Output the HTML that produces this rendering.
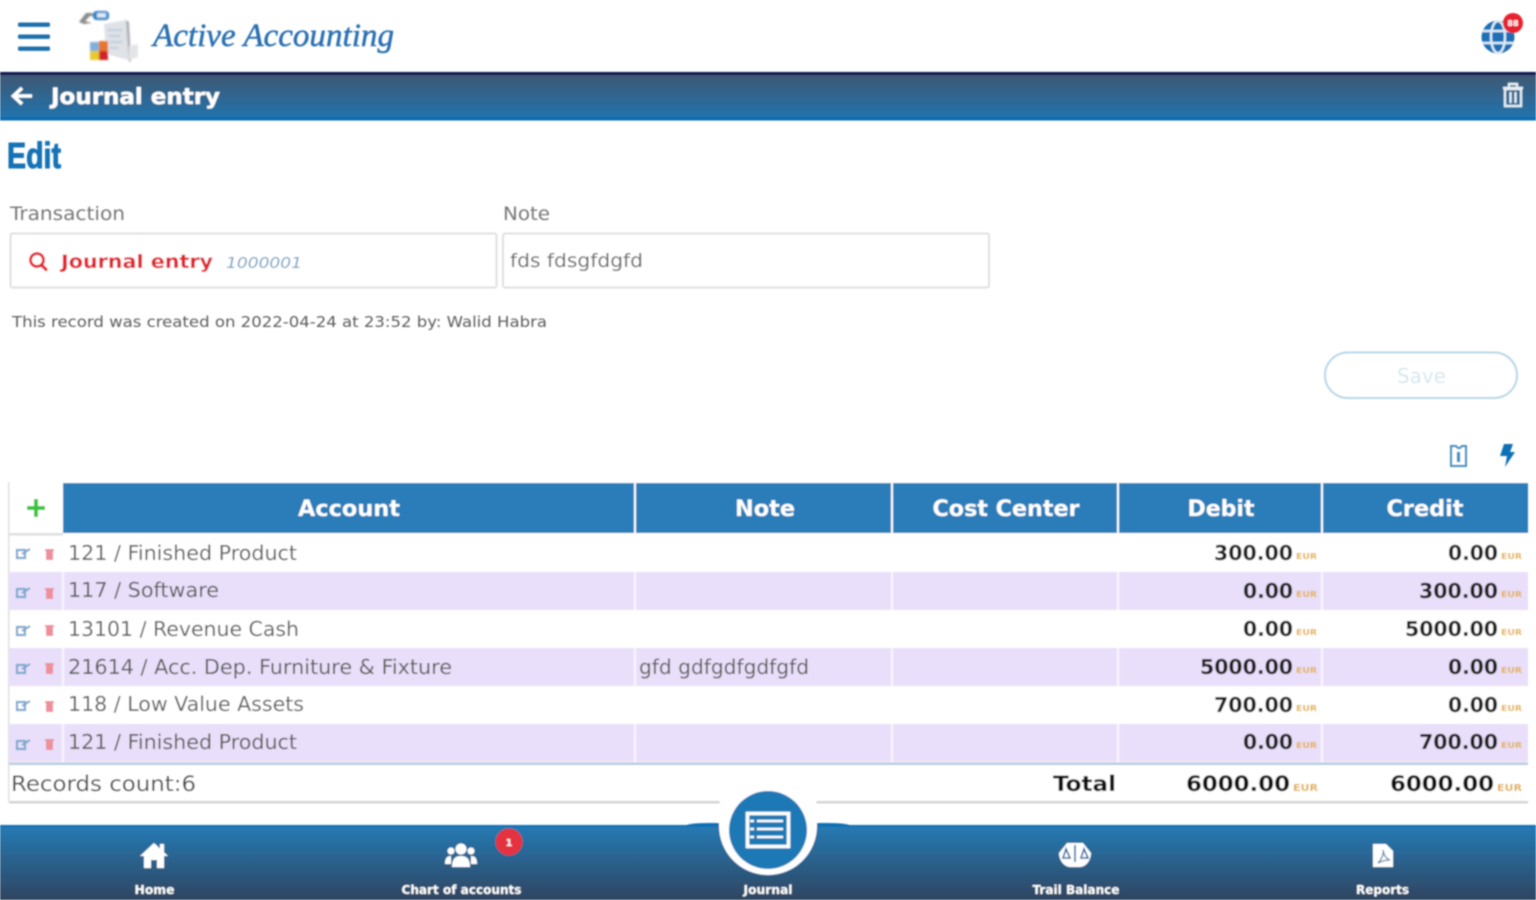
<!DOCTYPE html>
<html lang="en">
<head>
<meta charset="utf-8">
<title>Journal entry</title>
<style>
html,body{margin:0;padding:0;background:#fff;width:1536px;height:900px;overflow:hidden}
svg{display:block;position:absolute;left:0;top:0}
text{font-family:"DejaVu Sans","Liberation Sans",sans-serif}
.b{font-weight:700}
.g{fill:#5c5c5c;font-size:20px}
.n{fill:#1c1c1c;font-size:20px;font-weight:700}
.c{fill:#e3b040;font-size:8px;font-weight:700}
.h{fill:#fff;font-size:22px;font-weight:700;text-anchor:middle}
.f{fill:#fff;font-size:12px;font-weight:700;text-anchor:middle}
</style>
</head>
<body>
<svg width="1536" height="900" viewBox="0 0 1536 900" xmlns="http://www.w3.org/2000/svg">
<defs>
<linearGradient id="top" x1="0" y1="0" x2="0" y2="1"><stop offset="0" stop-color="#3d5873"/><stop offset="1" stop-color="#2273ad"/></linearGradient>
<linearGradient id="bot" x1="0" y1="0" x2="0" y2="1"><stop offset="0" stop-color="#2579b3"/><stop offset="1" stop-color="#2f4560"/></linearGradient>
<filter id="bl" x="-2%" y="-2%" width="104%" height="104%"><feGaussianBlur stdDeviation="0.8"/></filter>
<filter id="bl2" x="-5%" y="-5%" width="110%" height="110%"><feGaussianBlur stdDeviation="0.8"/></filter>
</defs>
<g filter="url(#bl)">
<!-- top bar -->
<g fill="#1f70ab"><rect x="18" y="22.500" width="32" height="4.400" rx="1.500"/><rect x="18" y="34.500" width="32" height="4.400" rx="1.500"/><rect x="18" y="46.500" width="32" height="4.400" rx="1.500"/></g>
<!-- logo -->
<g filter="url(#bl2)">
<path d="M79 22 L86 13 L92 13 L95 16 L90 16 L85 21 L92 23 L84 24 Z" fill="#8a8a8a"/>
<rect x="93" y="11" width="16" height="9" rx="3.500" fill="#2b80c5"/><rect x="97" y="13" width="9" height="4.500" fill="#dcebf7"/>
<path d="M104 24 L126 20 L129 60 L106 54 Z" fill="#dfe2e6"/>
<path d="M108 30H122M109 36H120M110 42H122M110 48H118" stroke="#b4c6da" stroke-width="1.500"/>
<path d="M126 20 L129 62 L131 61 L129 22 Z" fill="#a8adb2"/>
<path d="M129 46 L138 44 L138 57 L129 60 Z" fill="#e3e5e6"/>
<rect x="90" y="42" width="9" height="9" fill="#7fb0d8"/><rect x="99" y="41" width="9" height="10" fill="#e8762c"/><rect x="90" y="51" width="9" height="9" fill="#e6c92f"/><rect x="99" y="51" width="9" height="9" fill="#d2232a"/>
</g>
<text x="153" y="46" textLength="241" lengthAdjust="spacingAndGlyphs" style="font-family:'Liberation Serif',serif;font-style:italic;font-size:33px" fill="#2a70b2" stroke="#2a70b2" stroke-width=".5">Active Accounting</text>
<!-- globe -->
<circle cx="1498" cy="37" r="16.500" fill="#1b6fb5"/>
<g stroke="#dcebf6" stroke-width="2.400" fill="none"><ellipse cx="1498" cy="37" rx="7" ry="16"/><path d="M1482 31H1514M1482 43H1514"/></g>
<circle cx="1513" cy="23" r="10" fill="#e8202f"/>
<text x="1513" y="26" font-size="8" class="b" fill="#fff" text-anchor="middle">88</text>
<!-- title bar -->
<rect x="0" y="72" width="1536" height="4" fill="#0b1352"/>
<rect x="0" y="75" width="1536" height="43" fill="url(#top)"/>
<rect x="0" y="117" width="1536" height="3.500" fill="#0f6cb2"/>
<path d="M32 96H14M22 88L13.500 96L22 104" stroke="#fff" stroke-width="3.600" fill="none"/>
<text x="51" y="104" class="b" font-size="22" fill="#fff" stroke="#fff" stroke-width=".3" textLength="169" lengthAdjust="spacingAndGlyphs">Journal entry</text>
<g fill="none" stroke="#e6eef3" stroke-width="2.400"><path d="M1505 89H1521V106H1505Z"/><path d="M1503 88H1523M1509 87V84H1517V87M1510.500 92V103M1515.500 92V103"/></g>
<!-- Edit -->
<text x="7" y="168" class="b" style="font-family:'Liberation Sans',sans-serif" font-size="36" fill="#1272b5" stroke="#1272b5" stroke-width="1" textLength="54" lengthAdjust="spacingAndGlyphs">Edit</text>
<!-- form -->
<text x="10" y="220" font-size="19" fill="#777" textLength="115" lengthAdjust="spacingAndGlyphs">Transaction</text>
<text x="503" y="220" font-size="19" fill="#777" textLength="47" lengthAdjust="spacingAndGlyphs">Note</text>
<rect x="10.500" y="233.500" width="486" height="54" rx="2" fill="#fff" stroke="#e0e0e0" stroke-width="2"/>
<rect x="503" y="233.500" width="486" height="54" rx="2" fill="#fff" stroke="#e0e0e0" stroke-width="2"/>
<circle cx="37" cy="260" r="6.500" fill="none" stroke="#e8192c" stroke-width="2.800"/><path d="M41.500 265L47 270.500" stroke="#e8192c" stroke-width="3.200"/>
<text x="61" y="268" class="b" font-size="19" fill="#e0202f" textLength="152" lengthAdjust="spacingAndGlyphs">Journal entry</text>
<text x="226" y="268" font-size="15" font-style="italic" fill="#6f9fc0" textLength="76" lengthAdjust="spacingAndGlyphs">1000001</text>
<text x="510" y="267" font-size="19" fill="#666" textLength="133" lengthAdjust="spacingAndGlyphs">fds fdsgfdgfd</text>
<text x="12" y="327" font-size="15" fill="#5c5c5c" textLength="535" lengthAdjust="spacingAndGlyphs">This record was created on 2022-04-24 at 23:52 by: Walid Habra</text>
<!-- save -->
<rect x="1325" y="352.500" width="192" height="45.500" rx="22.700" fill="#fff" stroke="#b6d6e8" stroke-width="2"/>
<text x="1397" y="383" font-size="20" fill="#d8e7f0" textLength="49" lengthAdjust="spacingAndGlyphs">Save</text>
<!-- tool icons -->
<path d="M1451 446H1456L1458 448H1460L1462 446H1466V466H1451Z" fill="none" stroke="#4a8fc0" stroke-width="2"/><path d="M1458.500 452V462" stroke="#4a8fc0" stroke-width="3"/>
<path d="M1504 444H1513L1510 452H1515L1505 467L1507 456H1500Z" fill="#1170b5"/>
<!-- table -->
<rect x="9" y="482" width="1519" height="320" fill="#fff"/>
<rect x="8" y="482" width="1.500" height="320" fill="#e0e0e0"/>
<rect x="9" y="533" width="54" height="2.500" fill="#dedede"/>
<path d="M36 499V517M27 508H45" stroke="#35c63a" stroke-width="4"/>
<g fill="#2a7db8">
<rect x="63" y="483" width="571" height="50"/><rect x="636" y="483" width="255" height="50"/><rect x="893" y="483" width="224" height="50"/><rect x="1119" y="483" width="202" height="50"/><rect x="1323" y="483" width="205" height="50"/>
</g>
<text class="h" x="349" y="516" textLength="102" lengthAdjust="spacingAndGlyphs">Account</text>
<text class="h" x="765" y="516" textLength="60" lengthAdjust="spacingAndGlyphs">Note</text>
<text class="h" x="1006" y="516" textLength="147" lengthAdjust="spacingAndGlyphs">Cost Center</text>
<text class="h" x="1221" y="516" textLength="67" lengthAdjust="spacingAndGlyphs">Debit</text>
<text class="h" x="1425" y="516" textLength="77" lengthAdjust="spacingAndGlyphs">Credit</text>
<!-- purple rows -->
<g fill="#e9dffa">
<rect x="9" y="572" width="1519" height="38"/><rect x="9" y="648" width="1519" height="38"/><rect x="9" y="724" width="1519" height="38"/>
</g>
<g fill="#fff" opacity=".75">
<rect x="62" y="572" width="2" height="38"/><rect x="634" y="572" width="2" height="38"/><rect x="891" y="572" width="2" height="38"/><rect x="1117" y="572" width="2" height="38"/><rect x="1321" y="572" width="2" height="38"/>
<rect x="62" y="648" width="2" height="38"/><rect x="634" y="648" width="2" height="38"/><rect x="891" y="648" width="2" height="38"/><rect x="1117" y="648" width="2" height="38"/><rect x="1321" y="648" width="2" height="38"/>
<rect x="62" y="724" width="2" height="38"/><rect x="634" y="724" width="2" height="38"/><rect x="891" y="724" width="2" height="38"/><rect x="1117" y="724" width="2" height="38"/><rect x="1321" y="724" width="2" height="38"/>
</g>
<rect x="9" y="762.500" width="1519" height="2.500" fill="#b4cbe2"/>
<rect x="9" y="801" width="1519" height="2.500" fill="#d4d4d4"/>
<!-- row action icons -->
<g fill="none" stroke="#7ea8cf" stroke-width="2.200">
<path d="M17 550H25V558H17ZM22 554L30 549"/><path d="M17 589H25V597H17ZM22 593L30 588"/><path d="M17 627H25V635H17ZM22 631L30 626"/><path d="M17 665H25V673H17ZM22 669L30 664"/><path d="M17 702H25V710H17ZM22 706L30 701"/><path d="M17 741H25V749H17ZM22 745L30 740"/>
</g>
<g fill="#ee8f9c">
<path d="M45 549H54V551H53V560H46V551H45Z"/><path d="M45 588H54V590H53V599H46V590H45Z"/><path d="M45 625H54V627H53V636H46V627H45Z"/><path d="M45 663H54V665H53V674H46V665H45Z"/><path d="M45 701H54V703H53V712H46V703H45Z"/><path d="M45 739H54V741H53V750H46V741H45Z"/>
</g>
<!-- row text -->
<text class="g" x="68" y="560" textLength="229" lengthAdjust="spacingAndGlyphs">121 / Finished Product</text>
<text class="g" x="68" y="597" textLength="151" lengthAdjust="spacingAndGlyphs">117 / Software</text>
<text class="g" x="68" y="636" textLength="231" lengthAdjust="spacingAndGlyphs">13101 / Revenue Cash</text>
<text class="g" x="68" y="674" textLength="384" lengthAdjust="spacingAndGlyphs">21614 / Acc. Dep. Furniture &amp; Fixture</text>
<text class="g" x="68" y="711" textLength="236" lengthAdjust="spacingAndGlyphs">118 / Low Value Assets</text>
<text class="g" x="68" y="749" textLength="229" lengthAdjust="spacingAndGlyphs">121 / Finished Product</text>
<text class="g" x="639" y="674" textLength="170" lengthAdjust="spacingAndGlyphs">gfd gdfgdfgdfgfd</text>
<!-- numbers -->
<text class="n" x="1214" y="560" textLength="79" lengthAdjust="spacingAndGlyphs">300.00</text><text class="c" x="1296" y="559" textLength="21" lengthAdjust="spacingAndGlyphs">EUR</text>
<text class="n" x="1448" y="560" textLength="50" lengthAdjust="spacingAndGlyphs">0.00</text><text class="c" x="1501" y="559" textLength="21" lengthAdjust="spacingAndGlyphs">EUR</text>
<text class="n" x="1243" y="598" textLength="50" lengthAdjust="spacingAndGlyphs">0.00</text><text class="c" x="1296" y="597" textLength="21" lengthAdjust="spacingAndGlyphs">EUR</text>
<text class="n" x="1419" y="598" textLength="79" lengthAdjust="spacingAndGlyphs">300.00</text><text class="c" x="1501" y="597" textLength="21" lengthAdjust="spacingAndGlyphs">EUR</text>
<text class="n" x="1243" y="636" textLength="50" lengthAdjust="spacingAndGlyphs">0.00</text><text class="c" x="1296" y="635" textLength="21" lengthAdjust="spacingAndGlyphs">EUR</text>
<text class="n" x="1405" y="636" textLength="93" lengthAdjust="spacingAndGlyphs">5000.00</text><text class="c" x="1501" y="635" textLength="21" lengthAdjust="spacingAndGlyphs">EUR</text>
<text class="n" x="1200" y="674" textLength="93" lengthAdjust="spacingAndGlyphs">5000.00</text><text class="c" x="1296" y="673" textLength="21" lengthAdjust="spacingAndGlyphs">EUR</text>
<text class="n" x="1448" y="674" textLength="50" lengthAdjust="spacingAndGlyphs">0.00</text><text class="c" x="1501" y="673" textLength="21" lengthAdjust="spacingAndGlyphs">EUR</text>
<text class="n" x="1214" y="712" textLength="79" lengthAdjust="spacingAndGlyphs">700.00</text><text class="c" x="1296" y="711" textLength="21" lengthAdjust="spacingAndGlyphs">EUR</text>
<text class="n" x="1448" y="712" textLength="50" lengthAdjust="spacingAndGlyphs">0.00</text><text class="c" x="1501" y="711" textLength="21" lengthAdjust="spacingAndGlyphs">EUR</text>
<text class="n" x="1243" y="749" textLength="50" lengthAdjust="spacingAndGlyphs">0.00</text><text class="c" x="1296" y="748" textLength="21" lengthAdjust="spacingAndGlyphs">EUR</text>
<text class="n" x="1419" y="749" textLength="79" lengthAdjust="spacingAndGlyphs">700.00</text><text class="c" x="1501" y="748" textLength="21" lengthAdjust="spacingAndGlyphs">EUR</text>
<!-- totals -->
<text x="11" y="791" font-size="21" fill="#4c4c4c" textLength="185" lengthAdjust="spacingAndGlyphs">Records count:6</text>
<text class="b" x="1053" y="791" font-size="21" fill="#111" textLength="63" lengthAdjust="spacingAndGlyphs">Total</text>
<text class="b" x="1186" y="791" font-size="21" fill="#111" textLength="104" lengthAdjust="spacingAndGlyphs">6000.00</text><text class="c" x="1293" y="791" textLength="25" lengthAdjust="spacingAndGlyphs" style="font-size:10px">EUR</text>
<text class="b" x="1390" y="791" font-size="21" fill="#111" textLength="104" lengthAdjust="spacingAndGlyphs">6000.00</text><text class="c" x="1497" y="791" textLength="25" lengthAdjust="spacingAndGlyphs" style="font-size:10px">EUR</text>
<!-- bottom nav -->
<path d="M684 826 C690 823 700 823 720 823 L816 823 C836 823 846 823 852 826Z" fill="#1170b5"/>
<rect x="0" y="825" width="1536" height="3" fill="#1170b5"/>
<rect x="0" y="827" width="1536" height="73" fill="url(#bot)"/>
<circle cx="768" cy="826" r="50" fill="#1c5f96"/>
<path d="M718 815 A50 50 0 0 1 818 815 V823 H718Z" fill="#fff"/>
<circle cx="768" cy="826" r="49" fill="#fff"/>
<circle cx="768" cy="830" r="39" fill="#1f79b6"/>
<rect x="747.500" y="813.500" width="41" height="33" fill="none" stroke="#fff" stroke-width="3.600"/>
<path d="M757 821H783M757 829H783M757 837H783M750 821H754M750 829H754M750 837H754" stroke="#fff" stroke-width="2.600"/>
<!-- home -->
<path d="M154 843L168 856H164V868H157V860H151V868H144V856H140Z" fill="#fff"/>
<rect x="160" y="844" width="4" height="8" fill="#fff"/>
<text class="f" x="154.500" y="894" textLength="40" lengthAdjust="spacingAndGlyphs">Home</text>
<!-- people -->
<g fill="#fff"><circle cx="461" cy="849" r="5.500"/><path d="M452 867C452 858 456 856 461 856C466 856 470 858 470 867Z"/><circle cx="451" cy="851" r="3.500"/><circle cx="471" cy="851" r="3.500"/><path d="M445 864C445 858 447 856 451 856V864ZM477 864C477 858 475 856 471 856V864Z"/></g>
<circle cx="509" cy="842" r="13.500" fill="#e5303f"/>
<text class="b" x="509" y="846" font-size="10" fill="#fff" text-anchor="middle">1</text>
<text class="f" x="461.500" y="894" textLength="120" lengthAdjust="spacingAndGlyphs">Chart of accounts</text>
<text class="f" x="768" y="894" textLength="49" lengthAdjust="spacingAndGlyphs">Journal</text>
<!-- scale -->
<path d="M1067 843H1083L1091 853C1091 860 1086 867 1080 867H1070C1064 867 1059 860 1059 853Z" fill="#fff"/>
<path d="M1075 845V862M1066 849L1063 858H1070ZM1084 849L1081 858H1088Z" stroke="#2668a0" stroke-width="1.600" fill="none"/>
<text class="f" x="1076" y="894" textLength="87" lengthAdjust="spacingAndGlyphs">Trail Balance</text>
<!-- pdf -->
<path d="M1373 844H1386L1393 851V867H1373Z" fill="#fff"/>
<path d="M1378 863C1382 859 1384 853 1383 850C1384 856 1387 859 1390 860C1386 860 1382 861 1378 863Z" fill="none" stroke="#5d84ab" stroke-width="1.300"/>
<text class="f" x="1382.500" y="894" textLength="53" lengthAdjust="spacingAndGlyphs">Reports</text>
</g>
</svg>
</body>
</html>
